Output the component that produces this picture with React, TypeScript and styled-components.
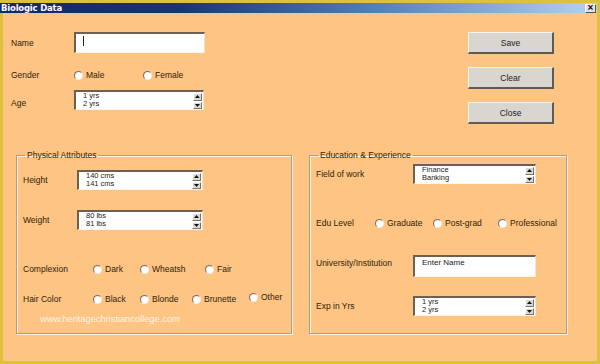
import styled, { createGlobalStyle } from "styled-components";

const GlobalStyle = createGlobalStyle`
  html, body { margin: 0; padding: 0; background: #dcc23a; }
  body { font-family: "Liberation Sans", Arial, sans-serif; }
`;

const App = () => {
  return (
    <>
      <GlobalStyle />
      <Window>
        <TitleBar>
          <Title>Biologic Data</Title>
          <CloseBox>×</CloseBox>
        </TitleBar>
        <Body>
          <Top>
            <MainFields>
              <Row $h={21}>
                <Label $w={63}>Name</Label>
                <TextBox $w={131} $h={21}>
                  <Caret />
                </TextBox>
              </Row>
              <Row $h={18} $mt={13}>
                <Label $w={63}>Gender</Label>
                <Radio $w={69} label="Male" />
                <Radio label="Female" />
              </Row>
              <Row $h={20} $mt={6}>
                <Label $w={63} $dy={3}>Age</Label>
                <SpinList items={["1 yrs", "2 yrs"]} width={130} />
              </Row>
            </MainFields>
            <Buttons>
              <Button>Save</Button>
              <Button>Clear</Button>
              <Button>Close</Button>
            </Buttons>
          </Top>
          <Groups>
            <Group $w={276}>
              <Legend>Physical Attributes</Legend>
              <Row $h={20} $mt={10}>
                <Label $w={54}>Height</Label>
                <SpinList items={["140 cms", "141 cms"]} width={126} />
              </Row>
              <Row $h={20} $mt={20}>
                <Label $w={54}>Weight</Label>
                <SpinList items={["80 lbs", "81 lbs"]} width={126} />
              </Row>
              <Row $h={14} $mt={32}>
                <Label $w={70}>Complexion</Label>
                <Radio $w={47} label="Dark" />
                <Radio $w={65} label="Wheatsh" />
                <Radio label="Fair" />
              </Row>
              <Row $h={14} $mt={16}>
                <Label $w={70}>Hair Color</Label>
                <Radio $w={47} label="Black" />
                <Radio $w={52} label="Blonde" />
                <Radio $w={57} label="Brunette" />
                <Radio label="Other" $dy={-2} />
              </Row>
              <Watermark>www.heritagechristiancollege.com</Watermark>
            </Group>
            <Group $w={258}>
              <Legend>Education &amp; Experience</Legend>
              <Row $h={20} $mt={4}>
                <Label $w={97}>Field of work</Label>
                <SpinList items={["Finance", "Banking"]} width={123} />
              </Row>
              <Row $h={14} $mt={32}>
                <Label $w={59}>Edu Level</Label>
                <Radio $w={58} label="Graduate" />
                <Radio $w={65} label="Post-grad" />
                <Radio label="Professional" />
              </Row>
              <Row $h={22} $mt={25} $align="flex-start">
                <Label $w={97} $dy={3}>University/Institution</Label>
                <TextBox $w={123} $h={22}>
                  <BoxText>Enter Name</BoxText>
                </TextBox>
              </Row>
              <Row $h={20} $mt={19}>
                <Label $w={97}>Exp in Yrs</Label>
                <SpinList items={["1 yrs", "2 yrs"]} width={123} />
              </Row>
            </Group>
          </Groups>
        </Body>
      </Window>
    </>
  );
};

export default App;

const Radio = ({ label, $w, $dy }: { label: string; $w?: number; $dy?: number }) => (
  <RadioWrap $w={$w} $dy={$dy}>
    <RadioDot />
    <RadioText>{label}</RadioText>
  </RadioWrap>
);

const SpinList = ({ items, width }: { items: string[]; width: number }) => (
  <ListBox $w={width}>
    <ListItems>
      {items.map((it) => (
        <ListItem key={it}>{it}</ListItem>
      ))}
    </ListItems>
    <Scroll>
      <ScrollBtn>
        <Arrow viewBox="0 0 5 3">
          <path d="M0 3 L2.5 0 L5 3 Z" />
        </Arrow>
      </ScrollBtn>
      <ScrollBtn>
        <Arrow viewBox="0 0 5 3">
          <path d="M0 0 L2.5 3 L5 0 Z" />
        </Arrow>
      </ScrollBtn>
    </Scroll>
  </ListBox>
);

const Window = styled.div`
  width: 600px;
  height: 364px;
  padding-top: 3px;
  box-sizing: border-box;
  display: flex;
  flex-direction: column;
  background: #dcc23a;
`;

const TitleBar = styled.div`
  width: 597px;
  height: 10px;
  display: flex;
  align-items: center;
  justify-content: space-between;
  background: linear-gradient(90deg, #0c2a66 0%, #15366f 30%, #4f7fb6 62%, #b4d3ef 100%);
`;

const Title = styled.div`
  color: #fff;
  font-weight: bold;
  font-size: 8.5px;
  line-height: 10px;
  margin-left: 1px;
  font-family: "DejaVu Sans", sans-serif;
  letter-spacing: -0.2px;
`;

const CloseBox = styled.div`
  width: 11px;
  height: 9px;
  margin-right: 1px;
  background: #e4e2dc;
  border: 1px solid #fff;
  border-right-color: #555;
  border-bottom-color: #555;
  box-sizing: border-box;
  font-size: 10px;
  line-height: 6px;
  text-align: center;
  font-weight: bold;
  color: #111;
`;

const Body = styled.div`
  flex: 1;
  width: 594px;
  margin-left: 3px;
  margin-bottom: 3px;
  background: #fec483;
  display: flex;
  flex-direction: column;
`;

const Top = styled.div`
  display: flex;
  padding: 19px 0 0 8px;
`;

const MainFields = styled.div`
  flex: 1;
  display: flex;
  flex-direction: column;
`;

const Buttons = styled.div`
  display: flex;
  flex-direction: column;
  gap: 13px;
  margin-right: 43px;
`;

const Button = styled.div`
  width: 86px;
  height: 22px;
  box-sizing: border-box;
  background: #d9d6d0;
  border: 1px solid #f4f2ee;
  border-right: 2px solid #5f5a52;
  border-bottom: 2px solid #5f5a52;
  display: flex;
  align-items: center;
  justify-content: center;
  font-size: 8.5px;
  color: #222;
`;

const Row = styled.div<{ $h: number; $mt?: number; $align?: string }>`
  display: flex;
  align-items: ${(p) => p.$align || "center"};
  height: ${(p) => p.$h}px;
  margin-top: ${(p) => p.$mt || 0}px;
`;

const Label = styled.div<{ $w: number; $dy?: number }>`
  width: ${(p) => p.$w}px;
  flex-shrink: 0;
  font-size: 8.5px;
  color: #2e1e08;
  position: relative;
  top: ${(p) => p.$dy || 0}px;
  white-space: nowrap;
`;

const TextBox = styled.div<{ $w: number; $h: number }>`
  width: ${(p) => p.$w}px;
  height: ${(p) => p.$h}px;
  box-sizing: border-box;
  background: #fff;
  border-top: 2px solid #6e6050;
  border-left: 2px solid #6e6050;
  border-right: 1px solid #f0e4d4;
  border-bottom: 1px solid #fff4e6;
  padding: 1px 7px;
`;

const Caret = styled.div`
  width: 1px;
  height: 10px;
  margin-top: 1px;
  background: #222;
`;

const BoxText = styled.div`
  font-size: 8px;
  color: #222;
  line-height: 10px;
`;

const RadioWrap = styled.div<{ $w?: number; $dy?: number }>`
  display: flex;
  align-items: center;
  width: ${(p) => (p.$w ? `${p.$w}px` : "auto")};
  flex-shrink: 0;
  position: relative;
  top: ${(p) => p.$dy || 0}px;
`;

const RadioDot = styled.div`
  width: 9px;
  height: 9px;
  box-sizing: border-box;
  border-radius: 50%;
  background: radial-gradient(circle at 60% 60%, #fff 0%, #fff 45%, #e6e2da 100%);
  border: 1px solid #7a7266;
  border-right-color: #f2efe8;
  border-bottom-color: #f2efe8;
  margin-right: 3px;
`;

const RadioText = styled.span`
  font-size: 8.5px;
  color: #2e1e08;
  white-space: nowrap;
`;

const ListBox = styled.div<{ $w: number }>`
  width: ${(p) => p.$w}px;
  height: 20px;
  box-sizing: border-box;
  background: #fff;
  border-top: 2px solid #6e6050;
  border-left: 2px solid #6e6050;
  border-right: 1px solid #f0e4d4;
  border-bottom: 1px solid #fff4e6;
  display: flex;
`;

const ListItems = styled.div`
  flex: 1;
  padding: 0 0 0 7px;
`;

const ListItem = styled.div`
  font-size: 7.5px;
  line-height: 8px;
  color: #222;
`;

const Scroll = styled.div`
  width: 9px;
  display: flex;
  flex-direction: column;
  gap: 1px;
  margin-right: 1px;
  padding-top: 1px;
`;

const ScrollBtn = styled.div`
  flex: 1;
  background: #dcd9d2;
  border: 1px solid #fff;
  border-right-color: #7a756c;
  border-bottom-color: #7a756c;
  display: flex;
  align-items: center;
  justify-content: center;
`;

const Arrow = styled.svg`
  width: 5px;
  height: 3px;
  fill: #111;
`;

const Groups = styled.div`
  display: flex;
  gap: 17px;
  padding-left: 13px;
  margin-top: 26px;
`;

const Group = styled.fieldset<{ $w: number }>`
  width: ${(p) => p.$w}px;
  height: 184px;
  box-sizing: border-box;
  margin: 0;
  padding: 0 6px;
  border: 1px solid #b59c7e;
  box-shadow: inset 1px 1px 0 #fff2e2, 1px 1px 0 #fff2e2;
  display: flex;
  flex-direction: column;
`;

const Legend = styled.legend`
  font-size: 8.5px;
  line-height: 10px;
  color: #2e1e08;
  padding: 0 2px;
  margin-left: 2px;
`;

const Watermark = styled.div`
  margin: 7px 0 0 17px;
  font-size: 9.5px;
  color: rgba(255, 255, 255, 0.8);
  letter-spacing: -0.1px;
`;
